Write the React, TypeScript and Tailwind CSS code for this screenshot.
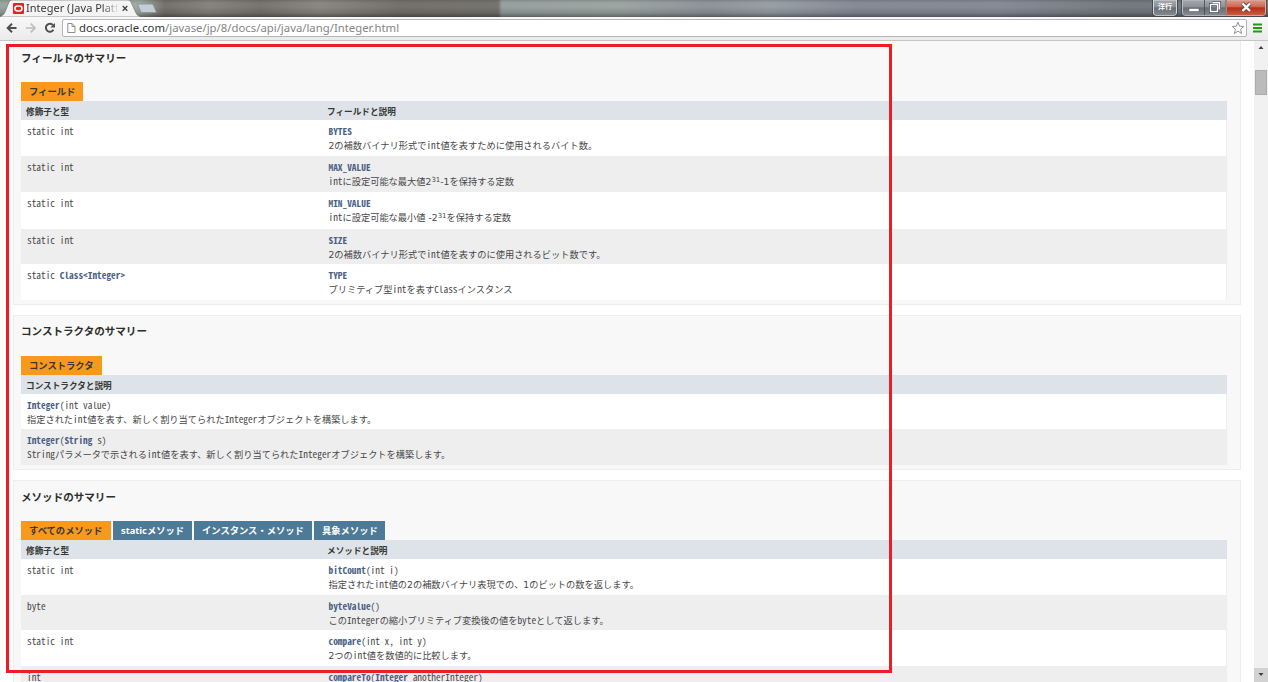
import type { ReactNode } from "react";

const MONO =
  "font-['Noto_Sans_CJK_JP',monospace] [font-feature-settings:'hwid'] text-[9.36px]";

function Code({ children }: { children: ReactNode }) {
  return <span className={`${MONO} whitespace-pre`}>{children}</span>;
}

function Link({ children }: { children: ReactNode }) {
  return <span className="font-bold text-[#4a6084]">{children}</span>;
}

function Heading({ children }: { children: ReactNode }) {
  return (
    <h3 className="h-[16px] text-[10.55px] leading-[16px] font-bold whitespace-nowrap text-[#2c2f2b]">
      {children}
    </h3>
  );
}

function Tab({ children, width, active }: { children: ReactNode; width: string; active?: boolean }) {
  return (
    <span
      className={`block h-[19px] pl-[8px] text-[9.3px] leading-[19px] font-bold whitespace-nowrap ${width} ${
        active ? "bg-[#f8981d] text-[#353833]" : "bg-[#4d7a97] text-white"
      }`}
    >
      {children}
    </span>
  );
}

function HeadRow({ first, second }: { first: string; second?: string }) {
  return (
    <div className="flex h-[19px] bg-[#dee3e9] pl-[5px] text-[8.65px] leading-[22px] font-bold text-[#353833]">
      <span className="w-[301px]">{first}</span>
      <span>{second}</span>
    </div>
  );
}

function Row({
  type,
  name,
  children,
  h = "h-[36px]",
  alt,
}: {
  type?: ReactNode;
  name: ReactNode;
  children?: ReactNode;
  h?: string;
  alt?: boolean;
}) {
  return (
    <div
      className={`flex border-[#eeeeee] pt-[4px] pl-[6px] text-[9.23px] leading-[15px] text-[#474747] ${h} ${
        alt ? "bg-[#eeeeef]" : "border-r bg-white"
      }`}
    >
      {type && (
        <div className="w-[301.5px] shrink-0">
          <Code>{type}</Code>
        </div>
      )}
      <div className="whitespace-nowrap">
        <div className="h-[15px]">
          <Code>{name}</Code>
        </div>
        <div className="h-[13px] leading-[13px]">{children}</div>
      </div>
    </div>
  );
}

const Sup = () => <sup className="relative top-[-3px] align-baseline text-[7px] leading-none">31</sup>;

function Titlebar() {
  return (
    <div className="relative h-[17px] bg-[linear-gradient(90deg,#97a69f_0px,#a0aaa4_140px,#74716c_165px,#87847f_210px,#77746f_260px,#8b8883_320px,#74716d_400px,#76746f_498px,#96a09e_502px,#9ba5a2_620px,#8d949a_710px,#979fa7_770px,#858b95_860px,#868c96_1000px,#747a82_1120px,#72787f_1268px)]">
      <div className="absolute inset-0 bg-[linear-gradient(180deg,#0002_0px,transparent_3px,transparent_7px,#0002_13px,#0006_17px)]" />
      <svg className="absolute top-0 left-0" width="170" height="17">
        <path d="M0 17 L2 15.5 Q4 15 5 12 L9 2 Q10 0 12 0 H128 Q130 0 131 2 L136 13 Q137 16 140 16.5 V17Z" fill="#f4f4f4" stroke="#777" strokeWidth=".7" />
        <path d="M137.5 4 H152 Q153 4 153.6 5.5 L156.5 12.6 H143 Q141 12.6 140.3 11Z" fill="#c3cdd4" stroke="#858d8e" strokeWidth=".8" />
        <rect x="13" y="3" width="11" height="11" rx="1" fill="#ee1c25" />
        <rect x="15" y="6" width="7" height="5" rx="2.5" fill="none" stroke="#fff" strokeWidth="1.6" />
        <path d="M122.7 6 L127.3 10.8 M127.3 6 L122.7 10.8" stroke="#444" strokeWidth="1.3" />
      </svg>
      <div className="absolute top-0 left-[26px] h-[16px] w-[93px] overflow-hidden bg-[linear-gradient(90deg,#333_76px,#3330_93px)] bg-clip-text font-['Noto_Sans',sans-serif] text-[11px] leading-[16px] whitespace-nowrap text-transparent">
        Integer (Java Platf
      </div>
      <svg className="absolute top-0 right-0" width="120" height="17">
        <defs>
          <linearGradient id="btn" x2="0" y2="1">
            <stop offset="0" stopColor="#a5a9ad" />
            <stop offset=".45" stopColor="#8d9196" />
            <stop offset=".5" stopColor="#696e74" />
            <stop offset="1" stopColor="#858a90" />
          </linearGradient>
          <linearGradient id="close" x2="0" y2="1">
            <stop offset="0" stopColor="#dc9c8e" />
            <stop offset=".45" stopColor="#cb6652" />
            <stop offset=".5" stopColor="#b52e15" />
            <stop offset="1" stopColor="#cb6040" />
          </linearGradient>
        </defs>
        <path d="M5.5 0 V13 Q5.5 15.5 8 15.5 H26 Q28.5 15.5 28.5 13 V0Z" fill="url(#btn)" stroke="#d4d6d8" />
        <path d="M4.5 0 V14 Q5 16.3 8 16.3 H26 Q29.5 16 29.5 13 V0" fill="none" stroke="#3d4145" strokeWidth=".8" />
        <path d="M34.5 0 V13 Q34.5 15.5 37 15.5 H78 V0Z" fill="url(#btn)" stroke="#b9bcc0" />
        <path d="M78.5 0 V15.5 H115 Q117.5 15.5 117.5 13 V0Z" fill="url(#close)" stroke="#dcb0a6" />
        <path d="M33.5 0 V13 Q33.5 16.4 37 16.4 H115 Q118.5 16.4 118.5 13 V0 M56.5 0 V15 M78 0 V15" fill="none" stroke="#44484c" strokeWidth=".8" />
        <rect x="41" y="8.5" width="10" height="3" fill="#fff" stroke="#555" strokeWidth=".5" />
        <path d="M64.5 2.5 H71.5 V9.5 M62.5 4.5 H69.5 V11.5 H62.5Z" fill="none" stroke="#444a50" strokeWidth="3" />
        <path d="M64.5 2.5 H71.5 V9.5 M62.5 4.5 H69.5 V11.5 H62.5Z" fill="none" stroke="#fff" strokeWidth="1.5" />
        <path d="M94.5 3.5 L102 11 M102 3.5 L94.5 11" stroke="#6b4a45" strokeWidth="4" />
        <path d="M94.5 3.5 L102 11 M102 3.5 L94.5 11" stroke="#fff" strokeWidth="2.4" />
      </svg>
      <div className="absolute top-0 left-[1154px] w-[22px] text-center text-[7px] leading-[15px] font-bold text-white">
        洋行
      </div>
    </div>
  );
}

function Toolbar() {
  return (
    <div className="flex h-[24px] items-start border-b border-[#c6c6c6] bg-[linear-gradient(180deg,#f8f8f8,#ebebeb)]">
      <svg className="shrink-0" width="62" height="22">
        <path d="M16.5 11 H8 M12 6.7 L7.7 11 L12 15.3" fill="none" stroke="#505050" strokeWidth="2" />
        <path d="M26 11 H34.5 M30.7 6.7 L35 11 L30.7 15.3" fill="none" stroke="#bdbdbd" strokeWidth="1.7" />
        <path d="M53 8.2 A4 4 0 1 0 53.4 12.7" fill="none" stroke="#505050" strokeWidth="2" />
        <path d="M55 6 V10.6 H50.4Z" fill="#505050" />
      </svg>
      <div className="mt-[2px] flex h-[18px] w-[1185px] shrink-0 items-center rounded-[2px] border border-[#b5b5b5] bg-white">
        <svg className="ml-[4px] shrink-0" width="12" height="14">
          <path d="M.8 2.5 H5 L8 5.5 V11.5 H.8Z M5 2.5 V5.5 H8" fill="#fff" stroke="#8e8e8e" />
        </svg>
        <span className="grow font-['Noto_Sans',sans-serif] text-[11.33px] leading-[16px] whitespace-nowrap text-[#858585]">
          <span className="text-[#333]">docs.oracle.com</span>/javase/jp/8/docs/api/java/lang/Integer.html
        </span>
        <svg className="mr-[1px] shrink-0" width="14" height="14" viewBox="0 0 14 14">
          <path d="M7 1.2 L8.6 5.2 L12.8 5.5 L9.6 8.3 L10.6 12.5 L7 10.2 L3.4 12.5 L4.4 8.3 L1.2 5.5 L5.4 5.2Z" fill="#fff" stroke="#929292" />
        </svg>
      </div>
      <svg className="ml-[6px] shrink-0" width="10" height="22">
        <path d="M0 7.5 H9 M0 11 H9 M0 14.5 H9" stroke="#1f9a12" strokeWidth="2" />
      </svg>
    </div>
  );
}

function Scrollbar() {
  return (
    <div className="flex w-[14px] shrink-0 flex-col items-center bg-[#f1f1f1]">
      <svg className="shrink-0" width="14" height="29">
        <path d="M4.5 8 L7 5 L9.5 8Z" fill="#404040" />
      </svg>
      <div className="h-[25px] w-[12px] shrink-0 border border-[#acacac] bg-[#bbbbbb]" />
      <div className="grow" />
      <svg className="shrink-0 bg-[#d2d2d2]" width="14" height="14">
        <path d="M4.5 5 L7 8 L9.5 5Z" fill="#404040" />
      </svg>
    </div>
  );
}

const SECTION = "shrink-0 border border-[#ededed] bg-[#f8f8f8] pl-[7px] pr-[13px]";

export default function App() {
  return (
    <div className="relative flex h-[682px] w-[1268px] flex-col overflow-hidden bg-white font-['DejaVu_Sans','Noto_Sans_CJK_JP',sans-serif]">
      <Titlebar />
      <Toolbar />
      <div className="flex h-[641px]">
        <main className="flex h-[641px] w-[1254px] flex-col overflow-hidden pr-[13px] pl-[13px]">
          <section className={`${SECTION} h-[264px] border-t-0 pt-[9px]`}>
            <Heading>フィールドのサマリー</Heading>
            <div className="mt-[16px] flex">
              <Tab active width="w-[62px]">フィールド</Tab>
            </div>
            <HeadRow first="修飾子と型" second="フィールドと説明" />
            <Row type="static int" name={<Link>BYTES</Link>}>
              2の補数バイナリ形式で<Code>int</Code>値を表すために使用されるバイト数。
            </Row>
            <Row alt type="static int" name={<Link>MAX_VALUE</Link>}>
              <Code>int</Code>に設定可能な最大値2<Sup />-1を保持する定数
            </Row>
            <Row h="h-[37px]" type="static int" name={<Link>MIN_VALUE</Link>}>
              <Code>int</Code>に設定可能な最小値 -2<Sup />を保持する定数
            </Row>
            <Row alt h="h-[35px]" type="static int" name={<Link>SIZE</Link>}>
              2の補数バイナリ形式で<Code>int</Code>値を表すのに使用されるビット数です。
            </Row>
            <Row type={<>static <Link>Class&lt;Integer&gt;</Link></>} name={<Link>TYPE</Link>}>
              プリミティブ型<Code>int</Code>を表す<Code>Class</Code>インスタンス
            </Row>
          </section>

          <section className={`${SECTION} mt-[10px] h-[155px] pt-[7px]`}>
            <Heading>コンストラクタのサマリー</Heading>
            <div className="mt-[17px] flex">
              <Tab active width="w-[81px]">コンストラクタ</Tab>
            </div>
            <HeadRow first="コンストラクタと説明" />
            <Row h="h-[35px]" name={<><Link>Integer</Link>(int value)</>}>
              指定された<Code>int</Code>値を表す、新しく割り当てられた<Code>Integer</Code>オブジェクトを構築します。
            </Row>
            <Row alt name={<><Link>Integer</Link>(<Link>String</Link> s)</>}>
              <Code>String</Code>パラメータで示される<Code>int</Code>値を表す、新しく割り当てられた<Code>Integer</Code>オブジェクトを構築します。
            </Row>
          </section>

          <section className={`${SECTION} mt-[10px] h-[300px] pt-[8px]`}>
            <Heading>メソッドのサマリー</Heading>
            <div className="mt-[16px] flex gap-[2px]">
              <Tab active width="w-[90px]">すべてのメソッド</Tab>
              <Tab width="w-[79px]"><span className="font-['Noto_Sans']">static</span>メソッド</Tab>
              <Tab width="w-[118px]">インスタンス・メソッド</Tab>
              <Tab width="w-[71px]">具象メソッド</Tab>
            </div>
            <HeadRow first="修飾子と型" second="メソッドと説明" />
            <Row type="static int" name={<><Link>bitCount</Link>(int i)</>}>
              指定された<Code>int</Code>値の2の補数バイナリ表現での、1のビットの数を返します。
            </Row>
            <Row alt h="h-[35px]" type="byte" name={<><Link>byteValue</Link>()</>}>
              この<Code>Integer</Code>の縮小プリミティブ変換後の値を<Code>byte</Code>として返します。
            </Row>
            <Row type="static int" name={<><Link>compare</Link>(int x, int y)</>}>
              2つの<Code>int</Code>値を数値的に比較します。
            </Row>
            <Row alt type="int" name={<><Link>compareTo</Link>(<Link>Integer</Link> anotherInteger)</>} />
          </section>
        </main>
        <Scrollbar />
      </div>
      <div className="pointer-events-none absolute top-[44px] left-[6px] h-[629px] w-[886px] border-[3px] border-[#ee1c25]" />
    </div>
  );
}
